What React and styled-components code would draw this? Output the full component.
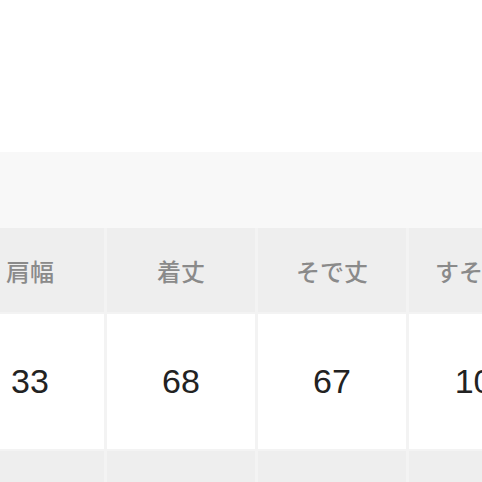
import styled, { createGlobalStyle } from "styled-components"

const GlobalStyle = createGlobalStyle`
    body{
        margin: 0;
        background-color: #FFFFFF;
        font-family: "Liberation Sans", "Noto Sans CJK JP", sans-serif;
        overflow: hidden;
    }
`

const headers = ["肩幅", "着丈", "そで丈", "すそ周り"]
const values = ["33", "68", "67", "102"]

export default function App(){
    return(
        <>
            <GlobalStyle />
            <Page>
                <TopSpace />
                <Band />
                <Table>
                    {headers.map((h, i) => <HeadCell key={"h" + i}>{h}</HeadCell>)}
                    {values.map((v, i) => <ValueCell key={"v" + i}>{v}</ValueCell>)}
                    {headers.map((h, i) => <HeadCell key={"n" + i} />)}
                </Table>
            </Page>
        </>
    )
}

const Page = styled.div`
    width: 482px;
    height: 482px;
    overflow: hidden;
`

const TopSpace = styled.div`
    height: 152px;
    background-color: #FFFFFF;
`

const Band = styled.div`
    height: 76px;
    background-color: #F8F8F8;
`

const Table = styled.div`
    display: grid;
    grid-template-columns: repeat(4, 148px);
    gap: 2px 3px;
    margin-left: -44px;
    width: max-content;
    background-color: #F3F3F3;
`

const HeadCell = styled.div`
    height: 84px;
    display: flex;
    align-items: center;
    justify-content: center;
    background-color: #EEEEEE;
    color: #8A8A8A;
    font-size: 24px;
    font-weight: 500;
    font-family: "Noto Sans CJK JP", sans-serif;
`

const ValueCell = styled.div`
    height: 135px;
    display: flex;
    align-items: center;
    justify-content: center;
    background-color: #FFFFFF;
    color: #222222;
    font-size: 34px;
`
